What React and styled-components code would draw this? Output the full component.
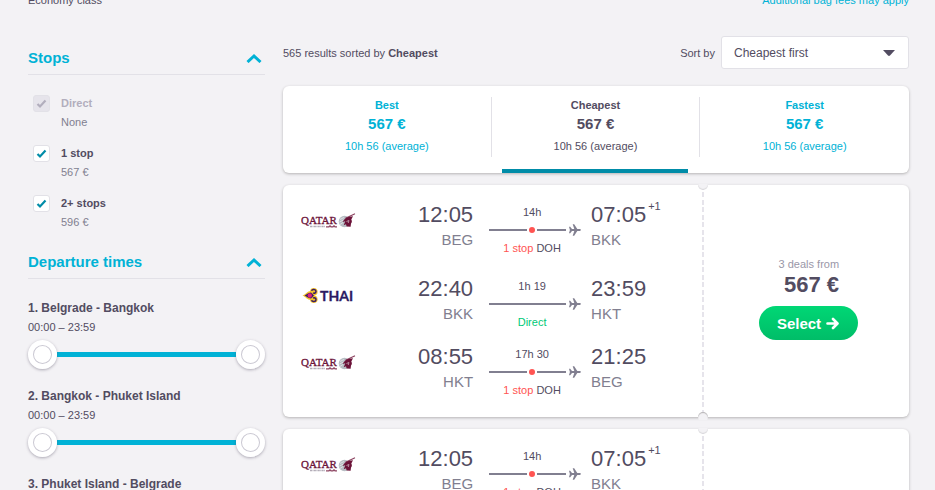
import React, { useState } from "react";
import styled, { createGlobalStyle } from "styled-components";

const colors = {
  page: "#f3f2f5",
  text: "#524c61",
  muted: "#817f90",
  pale: "#b2aebd",
  line: "#e2e1e7",
  blue: "#00b2d6",
  darkBlue: "#008ca8",
  green: "#00d775",
  red: "#ff5452",
};

const stops = [
  { id: "direct", label: "Direct", price: "None", disabled: true },
  { id: "one-stop", label: "1 stop", price: "567 €" },
  { id: "two-stops", label: "2+ stops", price: "596 €" },
];

const routes = [
  "1. Belgrade - Bangkok",
  "2. Bangkok - Phuket Island",
  "3. Phuket Island - Belgrade",
];

const sortTabs = ["Best", "Cheapest", "Fastest"];

const legs = [
  { airline: "qatar", depart: "12:05", from: "BEG", arrive: "07:05", to: "BKK", duration: "14h", via: "DOH", nextDay: true },
  { airline: "thai", depart: "22:40", from: "BKK", arrive: "23:59", to: "HKT", duration: "1h 19" },
  { airline: "qatar", depart: "08:55", from: "HKT", arrive: "21:25", to: "BEG", duration: "17h 30", via: "DOH" },
];

const QatarLogo = () => (
  <svg width="56" height="24" viewBox="0 0 56 24" role="img" aria-label="Qatar Airways">
    <text x="0" y="15" fontFamily="'Liberation Serif', serif" fontSize="11" fill="#6b1238" stroke="#6b1238" strokeWidth="0.3">
      QATAR
    </text>
    <path d="M9 17.500h15" stroke="#b3adb8" strokeWidth="1.400" strokeDasharray="2 .5 1 .4" />
    <path d="M25 17.800h3l1-1 1 1h2l1-1 1 1h2" fill="none" stroke="#8d4562" strokeWidth="1.300" />
    <circle cx="43.500" cy="12.500" r="5.800" fill="#b8bec4" />
    <path d="M39 10.500l4-2M38.500 13l4-2M39 15.500l3-2" stroke="#e6e8ea" strokeWidth="0.800" />
    <path d="M53.500 5L45 9" stroke="#8d4562" strokeWidth="1.300" strokeLinecap="round" />
    <path
      d="M52 7.300c-2 .4-5 .3-7 1.700-1.800 1.200-2.500 2.500-3.500 4l2.800-.8-1.600 4 2.300-1 .6 2.300 4 .3.4-3.300c1.300-1 1-3 .3-4z"
      fill="#6b1238"
    />
    <path d="M45.500 12.500l2.500-1-.8 2.500" fill="none" stroke="#c9aebb" strokeWidth="0.800" />
  </svg>
);

const ThaiLogo = () => (
  <svg width="56" height="24" viewBox="0 0 56 24" role="img" aria-label="Thai Airways">
    <path d="M1.500 12.500c3-1 4.500-4.500 8.500-4.500l4 4.500-4 4.500c-4 0-5.500-3.500-8.500-4.500z" fill="#f2c02b" />
    <circle cx="12.800" cy="8.700" r="3.800" fill="#f2c02b" />
    <circle cx="12.800" cy="16.300" r="3.800" fill="#f2c02b" />
    <path d="M3.500 12.500c2-.5 3.500-3 6.500-3l3 3-3 3c-3 0-4.500-2.500-6.500-3z" fill="#3a1c64" />
    <path
      d="M10.500 7.700c.8-1.800 4.200-1.700 4.500.5.200 1.700-1.700 2.500-3 1.700M10.500 17.300c.8 1.800 4.200 1.700 4.500-.5.200-1.700-1.700-2.500-3-1.700"
      fill="none"
      stroke="#3a1c64"
      strokeWidth="1.500"
    />
    <circle cx="8.800" cy="12.500" r="2.200" fill="#e0207c" />
    <text x="19" y="18" fontFamily="Lato, sans-serif" fontWeight="700" fontSize="14" fill="#2b1a63" stroke="#2b1a63" strokeWidth="0.300">
      THAI
    </text>
  </svg>
);

const PlaneIcon = () => (
  <svg width="12" height="12" viewBox="0 0 12 12" aria-hidden="true">
    <path
      d="M0 2.800h1.200L3 5.100h2.300L3.700.3h1.500l3.100 4.800h2.500c.6 0 1 .4 1 .9s-.4.900-1 .9H8.300l-3.100 4.800H3.700l1.600-4.800H3L1.200 9.200H0L.9 6z"
      fill={colors.muted}
    />
  </svg>
);

const ChevronUp = () => (
  <svg width="16" height="10" viewBox="0 0 16 10" aria-hidden="true">
    <path d="M1.500 9L8 3l6.500 6" fill="none" stroke="currentColor" strokeWidth="3" />
  </svg>
);

const CheckMark = () => (
  <svg width="17" height="17" viewBox="0 0 17 17" aria-hidden="true">
    <path d="M4.500 9l2.500 2.500 5.500-6" fill="none" stroke="currentColor" strokeWidth="2.200" />
  </svg>
);

const ArrowRight = () => (
  <svg width="13" height="13" viewBox="0 0 13 13" aria-hidden="true">
    <path d="M1.500 6.500h9M7 2l4.500 4.500L7 11" fill="none" stroke="currentColor" strokeWidth="2.600" strokeLinecap="round" strokeLinejoin="round" />
  </svg>
);

const StopFilter = ({ id, label, price, disabled }) => {
  const [checked, setChecked] = useState(true);
  return (
    <StopRow>
      <CheckWrap $disabled={disabled}>
        <Checkbox
          type="checkbox"
          id={id}
          checked={checked}
          disabled={disabled}
          onChange={(ev) => setChecked(ev.target.checked)}
        />
        {checked && <CheckMark />}
      </CheckWrap>
      <StopLabel htmlFor={id} $disabled={disabled}>
        <strong>{label}</strong>
        <span>{price}</span>
      </StopLabel>
    </StopRow>
  );
};

const formatTime = (minutes) =>
  `${String(Math.floor(minutes / 60)).padStart(2, "0")}:${String(minutes % 60).padStart(2, "0")}`;

const TimeFilter = ({ route }) => {
  const [start, setStart] = useState(0);
  const [end, setEnd] = useState(1439);
  return (
    <TimeGroup>
      <RouteName>{route}</RouteName>
      <TimeRange>
        {formatTime(start)} – {formatTime(end)}
      </TimeRange>
      <Slider>
        <Range
          type="range"
          min="0"
          max="1439"
          value={start}
          aria-label={`${route} earliest`}
          onChange={(ev) => setStart(Math.min(Number(ev.target.value), end))}
        />
        <Range
          type="range"
          min="0"
          max="1439"
          value={end}
          aria-label={`${route} latest`}
          onChange={(ev) => setEnd(Math.max(Number(ev.target.value), start))}
        />
      </Slider>
    </TimeGroup>
  );
};

const Leg = ({ airline, depart, from, arrive, to, duration, via, nextDay }) => (
  <LegRow $nextDay={nextDay}>
    <Logo>{airline === "qatar" ? <QatarLogo /> : <ThaiLogo />}</Logo>
    <Place $end>
      <Time>{depart}</Time>
      <Code>{from}</Code>
    </Place>
    <Journey>
      <JourneyText>{duration}</JourneyText>
      <Track>
        <Segment $grow={via ? 38 : 77} />
        {via && (
          <>
            <StopDot />
            <Segment $grow={29} />
          </>
        )}
        <PlaneIcon />
      </Track>
      <JourneyText>
        {via ? (
          <>
            <StopCount>1 stop</StopCount> {via}
          </>
        ) : (
          <DirectText>Direct</DirectText>
        )}
      </JourneyText>
    </Journey>
    <Place>
      <Time>
        {arrive}
        {nextDay && <NextDay>+1</NextDay>}
      </Time>
      <Code>{to}</Code>
    </Place>
  </LegRow>
);

const Ticket = () => (
  <TicketCard>
    <Legs>
      {legs.map((leg) => (
        <Leg key={leg.depart} {...leg} />
      ))}
    </Legs>
    <Stub>
      <Deal>
        <DealCount>3 deals from</DealCount>
        <DealPrice>567 €</DealPrice>
        <SelectButton type="button">
          Select
          <ArrowRight />
        </SelectButton>
      </Deal>
    </Stub>
  </TicketCard>
);

const App = () => {
  const [activeTab, setActiveTab] = useState("Cheapest");
  const [openStops, setOpenStops] = useState(true);
  const [openTimes, setOpenTimes] = useState(true);
  return (
    <>
      <GlobalStyle />
      <TopBar>
        <span>Economy class</span>
        <BagLink href="#bags">Additional bag fees may apply</BagLink>
      </TopBar>
      <Page>
        <Sidebar>
          <FilterHeading type="button" aria-expanded={openStops} onClick={() => setOpenStops(!openStops)}>
            Stops
            <ChevronUp />
          </FilterHeading>
          {openStops && (
            <StopList>
              {stops.map((stop) => (
                <StopFilter key={stop.id} {...stop} />
              ))}
            </StopList>
          )}
          <FilterHeading type="button" aria-expanded={openTimes} onClick={() => setOpenTimes(!openTimes)}>
            Departure times
            <ChevronUp />
          </FilterHeading>
          {openTimes && (
            <TimeList>
              {routes.map((route) => (
                <TimeFilter key={route} route={route} />
              ))}
            </TimeList>
          )}
        </Sidebar>
        <Results>
          <SortRow>
            <span>
              565 results sorted by <strong>Cheapest</strong>
            </span>
            <SortControl>
              <label htmlFor="sort">Sort by</label>
              <SelectWrap>
                <SortSelect id="sort" defaultValue="cheapest">
                  <option value="cheapest">Cheapest first</option>
                  <option value="fastest">Fastest first</option>
                </SortSelect>
                <Caret viewBox="0 0 12 6" aria-hidden="true">
                  <path d="M0 0h12L7 5.500q-1 .8-2 0z" fill={colors.text} />
                </Caret>
              </SelectWrap>
            </SortControl>
          </SortRow>
          <Tabs>
            {sortTabs.map((tab) => (
              <Tab key={tab} type="button" $active={tab === activeTab} onClick={() => setActiveTab(tab)}>
                <TabBody>
                  <TabName>{tab}</TabName>
                  <TabPrice>567 €</TabPrice>
                  <TabDuration>10h 56 (average)</TabDuration>
                </TabBody>
              </Tab>
            ))}
          </Tabs>
          <Ticket />
          <Ticket />
        </Results>
      </Page>
    </>
  );
};

const GlobalStyle = createGlobalStyle`
  * {
    box-sizing: border-box;
  }
  html {
    scrollbar-width: none;
  }
  body {
    margin: 0;
    background: ${colors.page};
    color: ${colors.text};
    font-family: "Liberation Sans", Arial, sans-serif;
    font-size: 11px;
    line-height: 16px;
  }
  button {
    border: none;
    padding: 0;
    background: none;
    font-family: inherit;
    cursor: pointer;
  }
  svg {
    flex-shrink: 0;
  }
`;

const TopBar = styled.header`
  display: flex;
  align-items: flex-end;
  justify-content: space-between;
  height: 8px;
  padding: 0 26px 0 28px;
  overflow: hidden;
`;

const BagLink = styled.a`
  color: ${colors.blue};
  text-decoration: none;
`;

const Page = styled.div`
  display: grid;
  grid-template-columns: 237px minmax(0, 1fr);
  column-gap: 18px;
  padding: 28px 26px 0 28px;
`;

const Sidebar = styled.aside`
  padding-top: 13px;
`;

const FilterHeading = styled.button`
  display: flex;
  align-items: center;
  justify-content: space-between;
  width: 100%;
  padding: 0 3px 7px 0;
  border-bottom: 1px solid ${colors.line};
  color: ${colors.blue};
  font-size: 15px;
  font-weight: bold;
  line-height: 18px;
`;

const StopList = styled.div`
  display: flex;
  flex-direction: column;
  gap: 12px;
  padding: 19px 0 21px 5px;
`;

const StopRow = styled.div`
  display: flex;
  gap: 11px;
  line-height: 19px;
`;

const CheckWrap = styled.span`
  display: grid;
  height: 19px;
  align-items: center;
  color: ${({ $disabled }) => ($disabled ? colors.pale : colors.darkBlue)};

  > * {
    grid-area: 1 / 1;
  }

  svg {
    pointer-events: none;
  }
`;

const Checkbox = styled.input`
  appearance: none;
  width: 17px;
  height: 17px;
  margin: 0;
  border: 1px solid ${colors.line};
  border-radius: 3px;
  background: #fff;

  &:disabled {
    background: #e6e4eb;
  }
`;

const StopLabel = styled.label`
  display: flex;
  flex-direction: column;
  color: ${colors.muted};

  strong {
    color: ${({ $disabled }) => ($disabled ? colors.pale : colors.text)};
  }
`;

const TimeList = styled.div`
  display: flex;
  flex-direction: column;
  gap: 18px;
  padding-top: 20px;
`;

const TimeGroup = styled.div`
  display: flex;
  flex-direction: column;
  line-height: 19px;
`;

const RouteName = styled.strong`
  font-size: 12px;
`;

const TimeRange = styled.span`
  margin-bottom: 3px;
`;

// two range inputs share one cell, only their thumbs take the pointer
const Slider = styled.div`
  display: grid;
  background: linear-gradient(${colors.blue}, ${colors.blue}) center / calc(100% - 28px) 5px no-repeat;
`;

const Range = styled.input`
  appearance: none;
  grid-area: 1 / 1;
  width: 100%;
  height: 29px;
  margin: 0;
  background: transparent;
  pointer-events: none;

  &::-webkit-slider-thumb {
    appearance: none;
    width: 29px;
    height: 29px;
    border-radius: 50%;
    background: #fff;
    box-shadow: inset 0 0 0 5px #fff, inset 0 0 0 6px #cbc9d3, 0 1px 3px rgba(82, 76, 97, 0.45);
    pointer-events: auto;
  }
`;

const Results = styled.main`
  display: flex;
  flex-direction: column;
  gap: 12px;
`;

const SortRow = styled.div`
  display: flex;
  align-items: center;
  justify-content: space-between;
  padding-bottom: 5px;
`;

const SortControl = styled.div`
  display: flex;
  align-items: center;
  gap: 6px;
`;

const SelectWrap = styled.div`
  position: relative;
  width: 188px;
`;

const SortSelect = styled.select`
  appearance: none;
  display: block;
  width: 100%;
  height: 33px;
  padding: 0 32px 0 12px;
  border: 1px solid ${colors.line};
  border-radius: 3px;
  background: #fff;
  color: ${colors.text};
  font-family: inherit;
  font-size: 12px;
`;

const Caret = styled.svg`
  position: absolute;
  top: 14px;
  right: 14px;
  width: 12px;
  height: 6px;
  pointer-events: none;
`;

const Card = styled.section`
  border-radius: 6px;
  background: #fff;
  box-shadow: 0 1px 3px rgba(37, 32, 31, 0.3);
`;

const Tabs = styled(Card)`
  display: grid;
  grid-template-columns: repeat(3, 1fr);
`;

const Tab = styled.button`
  display: flex;
  flex-direction: column;
  padding-top: 11px;
  color: ${({ $active }) => ($active ? colors.text : colors.blue)};

  &::after {
    content: "";
    align-self: stretch;
    height: 4px;
    margin: 12px 12px 0 10px;
    background: ${({ $active }) => ($active ? colors.darkBlue : "transparent")};
  }
`;

const TabBody = styled.span`
  display: flex;
  flex-direction: column;
  align-self: stretch;
  font-size: 11px;
  text-align: center;

  ${Tab}:not(:last-child) & {
    border-right: 1px solid ${colors.line};
  }
`;

const TabName = styled.strong`
  line-height: 16px;
`;

const TabPrice = styled.strong`
  font-size: 15px;
  line-height: 22px;
`;

const TabDuration = styled.span`
  line-height: 22px;
`;

const TicketCard = styled(Card)`
  display: flex;
`;

const Legs = styled.div`
  flex: 1;
  padding: 7px 18px 15px;
`;

const LegRow = styled.div`
  display: grid;
  grid-template-columns: 56px 5fr 118px 4fr;
  align-items: start;
  padding: 9px 0 ${({ $nextDay }) => ($nextDay ? "10px" : "4px")};
`;

const Logo = styled.div`
  display: flex;
  padding-top: 8px;
`;

const Place = styled.div`
  display: flex;
  flex-direction: column;
  align-items: ${({ $end }) => ($end ? "flex-end" : "flex-start")};
`;

const Time = styled.span`
  display: flex;
  align-items: flex-start;
  gap: 2px;
  font-size: 22px;
  line-height: 28px;
`;

const NextDay = styled.sup`
  font-size: 11px;
  line-height: 10px;
`;

const Code = styled.span`
  color: ${colors.muted};
  font-size: 15px;
  line-height: 22px;
`;

const Journey = styled.div`
  display: flex;
  flex-direction: column;
  padding: 3px 10px 0 16px;
`;

const JourneyText = styled.span`
  padding-right: 6px;
  text-align: center;
`;

const Track = styled.div`
  display: flex;
  align-items: center;
  height: 20px;

  svg {
    margin-left: 3px;
  }
`;

const Segment = styled.span`
  flex: ${({ $grow }) => $grow} 1 0;
  height: 2px;
  background: ${colors.muted};
`;

const StopDot = styled.span`
  width: 6px;
  height: 6px;
  margin: 0 2px;
  border-radius: 50%;
  background: ${colors.red};
`;

const StopCount = styled.span`
  color: ${colors.red};
`;

const DirectText = styled.span`
  color: #00c976;
`;

const Stub = styled.div`
  position: relative;
  display: flex;
  flex: 0 0 207px;
  align-items: center;
  justify-content: center;
  padding: 0 0 6px 6px;
  border-radius: 0 6px 6px 0;
  background: repeating-linear-gradient(
      #e6e4eb 0 5px,
      #fff 5px 7px,
      #e6e4eb 7px 12px,
      #fff 12px 15px
    )
    left / 2px 100% no-repeat;

  /* half-round notches where the ticket tears */
  &::before,
  &::after {
    content: "";
    position: absolute;
    left: -4px;
    width: 10px;
    height: 6px;
    background: ${colors.page};
  }

  &::before {
    top: -1px;
    border-radius: 0 0 5px 5px;
    box-shadow: inset 0 -1px 1px rgba(37, 32, 31, 0.12);
  }

  &::after {
    bottom: -3px;
    height: 8px;
    border-radius: 5px 5px 0 0;
    box-shadow: inset 0 1px 1px rgba(37, 32, 31, 0.3);
  }
`;

const Deal = styled.div`
  display: flex;
  flex-direction: column;
  align-items: flex-end;
`;

const DealCount = styled.span`
  padding-right: 19px;
  color: #9a97a8;
`;

const DealPrice = styled.strong`
  padding-right: 19px;
  font-size: 22px;
  line-height: 26px;
`;

const SelectButton = styled.button`
  display: flex;
  align-items: center;
  gap: 5px;
  height: 34px;
  margin-top: 8px;
  padding: 0 19px 0 18px;
  border-radius: 17px;
  background: linear-gradient(${colors.green}, #00bd68);
  color: #fff;
  font-size: 15px;
  font-weight: bold;
`;

export default App;
